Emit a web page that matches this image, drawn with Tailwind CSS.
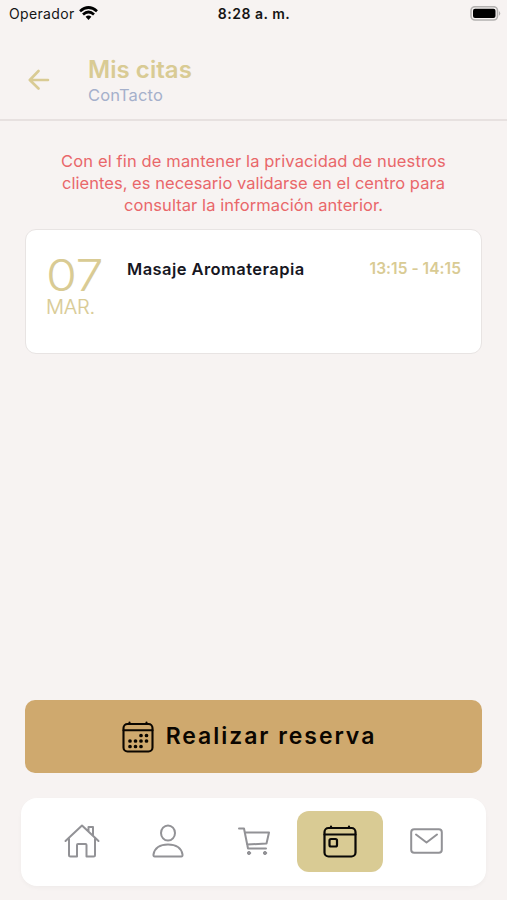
<!DOCTYPE html>
<html lang="es">
<head>
<meta charset="utf-8">
<meta name="viewport" content="width=device-width, initial-scale=1">
<title>Mis citas</title>
<script src="https://cdn.jsdelivr.net/npm/@tailwindcss/browser@4"></script>
</head>
<body class="bg-[#f7f3f2] font-['Inter',sans-serif]">
<div class="flex h-[900px] w-[507px] flex-col overflow-hidden whitespace-nowrap">
  <div class="grid h-7 grid-cols-3 items-center pl-[9px] pr-[6px] text-[14px] leading-7 text-[#151515]">
    <div class="flex items-center gap-[4px]">
      <span class="tracking-[0.35px]">Operador</span>
      <svg class="-mt-0.5 h-[14px] w-[19px]" viewBox="0 0 19 14" fill="none" stroke="#000" stroke-width="2.700"><path d="M1 5.200Q9.500-2.200 18 5.200M4 8.500Q9.500 3.500 15 8.500"/><path d="M6.600 10.800Q9.500 8.400 12.400 10.800L9.500 13.900Z" fill="#000" stroke="none"/></svg>
    </div>
    <span class="-ml-[2px] text-center font-semibold tracking-[0.500px]">8:28 a. m.</span>
    <svg class="-mt-0.5 h-[15px] w-[31px] justify-self-end" viewBox="0 0 31 15"><rect x="1" y=".7" width="26.500" height="13.300" rx="4" fill="#f7f3f2" stroke="#b3b1b0" stroke-width="1.600"/><rect x="3" y="2.800" width="22.500" height="9.200" rx="2" fill="#000"/><path d="M29 5q2.500 2.400 0 4.800z" fill="#b3b1b0"/></svg>
  </div>
  <header class="flex h-[93px] shrink-0 border-b-2 border-[#e7e1e0] pl-7">
    <svg class="mt-[41px] h-[22px] w-[22px]" viewBox="0 0 22 22" fill="none" stroke="#d9cb94" stroke-width="2.600" stroke-linecap="round" stroke-linejoin="round"><path d="M20 11H2M10.500 2L1.800 11l8.700 8.500"/></svg>
    <div class="ml-[38px] pt-[27px]">
      <h1 class="text-[24px] font-semibold leading-[30px] tracking-[0.05px] text-[#d9cb94]">Mis citas</h1>
      <p class="text-[16.500px] leading-[21px] tracking-[0.15px] text-[#a5b0cb]">ConTacto</p>
    </div>
  </header>
  <main class="flex flex-1 flex-col px-[25px]">
    <div class="mt-[29px] flex flex-col items-center text-[16.500px] leading-[22px] text-[#e9676a]">
      <span class="tracking-[0.130px]">Con el fin de mantener la privacidad de nuestros</span>
      <span class="tracking-[0.040px]">clientes, es necesario validarse en el centro para</span>
      <span class="tracking-[0.070px]">consultar la información anterior.</span>
    </div>
    <article class="mt-[13px] flex h-[125px] rounded-[11px] border-[1.500px] border-[#e8e4e3] bg-white pl-5 pr-5">
      <div class="w-[81px] pt-[24px] text-[#d9cb94]">
        <div class="origin-left scale-x-[1.140] text-[44px] font-light leading-[42px] tracking-[-0.500px]">07</div>
        <div class="text-[20px] font-light leading-[22px] tracking-[-0.200px] [-webkit-text-stroke:0.200px_#d9cb94]">MAR.</div>
      </div>
      <h2 class="pt-[28px] text-[16.500px] font-semibold leading-[22px] tracking-[0.430px] text-[#17171f]">Masaje Aromaterapia</h2>
      <time class="ml-auto pt-[28px] text-[15.500px] font-semibold leading-[22px] tracking-[0.050px] text-[#d9cb94]">13:15 - 14:15</time>
    </article>
    <button class="mb-[25px] mt-auto flex h-[73px] shrink-0 items-center justify-center gap-3 rounded-[10px] bg-[#cfa96e] pr-[9px] text-[#0b0600]">
      <svg class="mt-px h-8 w-8" viewBox="0 0 32 32" fill="none" stroke="currentColor" stroke-width="2.100" stroke-linecap="round"><rect x="1.500" y="3" width="29" height="27.500" rx="4"/><path d="M1.500 9.300h29M7.500 1.500V3M24.500 1.500V3"/><path stroke-width="3.700" d="M19 14.500h.01M24.500 14.500h.01M8 20h.01M13.500 20h.01M19 20h.01M24.500 20h.01M8 25.500h.01M13.500 25.500h.01M19 25.500h.01"/></svg>
      <span class="-mt-[2px] text-[23px] font-semibold leading-[30px] tracking-[1.950px]">Realizar reserva</span>
    </button>
  </main>
  <nav class="mb-[14px] ml-[21px] mr-[21px] grid h-[88px] shrink-0 grid-cols-[86px_86px_86px_86px_86px] items-center justify-items-center rounded-[16px] bg-white pb-[2px] pl-[18px] shadow-[0_2px_4px_#00000008]">
    <svg class="h-[34px] w-[36px]" viewBox="0 0 36 34" fill="none" stroke="#929296" stroke-width="2" stroke-linecap="round" stroke-linejoin="round"><path d="M1.500 17L18 1.500 34.500 17M5 14.500V31q0 1.500 1.500 1.500H13V21q0-1 1-1h7.500q1 0 1 1v11.500h7q1.500 0 1.500-1.500V14.500M24.500 7V3h4.500v8.500"/></svg>
    <svg class="h-[34px] w-[32px]" viewBox="0 0 32 34" fill="none" stroke="#929296" stroke-width="2"><ellipse cx="16" cy="9" rx="7" ry="7.600"/><path d="M2.800 32.500Q1.200 32.500 1.500 30.500C2.500 24.200 8 20.500 16 20.500S29.500 24.200 30.500 30.500Q30.800 32.500 29.200 32.500Z"/></svg>
    <svg class="h-[30px] w-[32px]" viewBox="0 0 32 30" fill="none" stroke="#929296" stroke-width="2" stroke-linecap="round" stroke-linejoin="round"><path d="M1 2.500h5L10 22.500H28M7 6.500H31L28.500 17.500 9 18.500"/><circle cx="11" cy="27" r="1.600" fill="#929296" stroke-width="1"/><circle cx="27" cy="27" r="1.600" fill="#929296" stroke-width="1"/></svg>
    <div class="flex h-[61px] w-[86px] items-center justify-center rounded-[12px] bg-[#d9cb94]">
      <svg class="h-[34px] w-[34px]" viewBox="0 0 34 34" fill="none" stroke="#090806" stroke-width="2.200" stroke-linecap="round"><rect x="1.500" y="4" width="31" height="28.500" rx="4"/><path d="M1.500 10.500h31M8 2.500V4M26 2.500V4"/><rect x="6.500" y="15" width="7.500" height="7.500" rx="1.500"/></svg>
    </div>
    <svg class="h-[26px] w-[33px]" viewBox="0 0 33 26" fill="none" stroke="#929296" stroke-width="2" stroke-linecap="round" stroke-linejoin="round"><rect x="1.200" y="1.200" width="30.600" height="23.600" rx="3"/><path d="M6 6.500L16.500 14.500 27 6.500"/></svg>
  </nav>
</div>
</body>
</html>
